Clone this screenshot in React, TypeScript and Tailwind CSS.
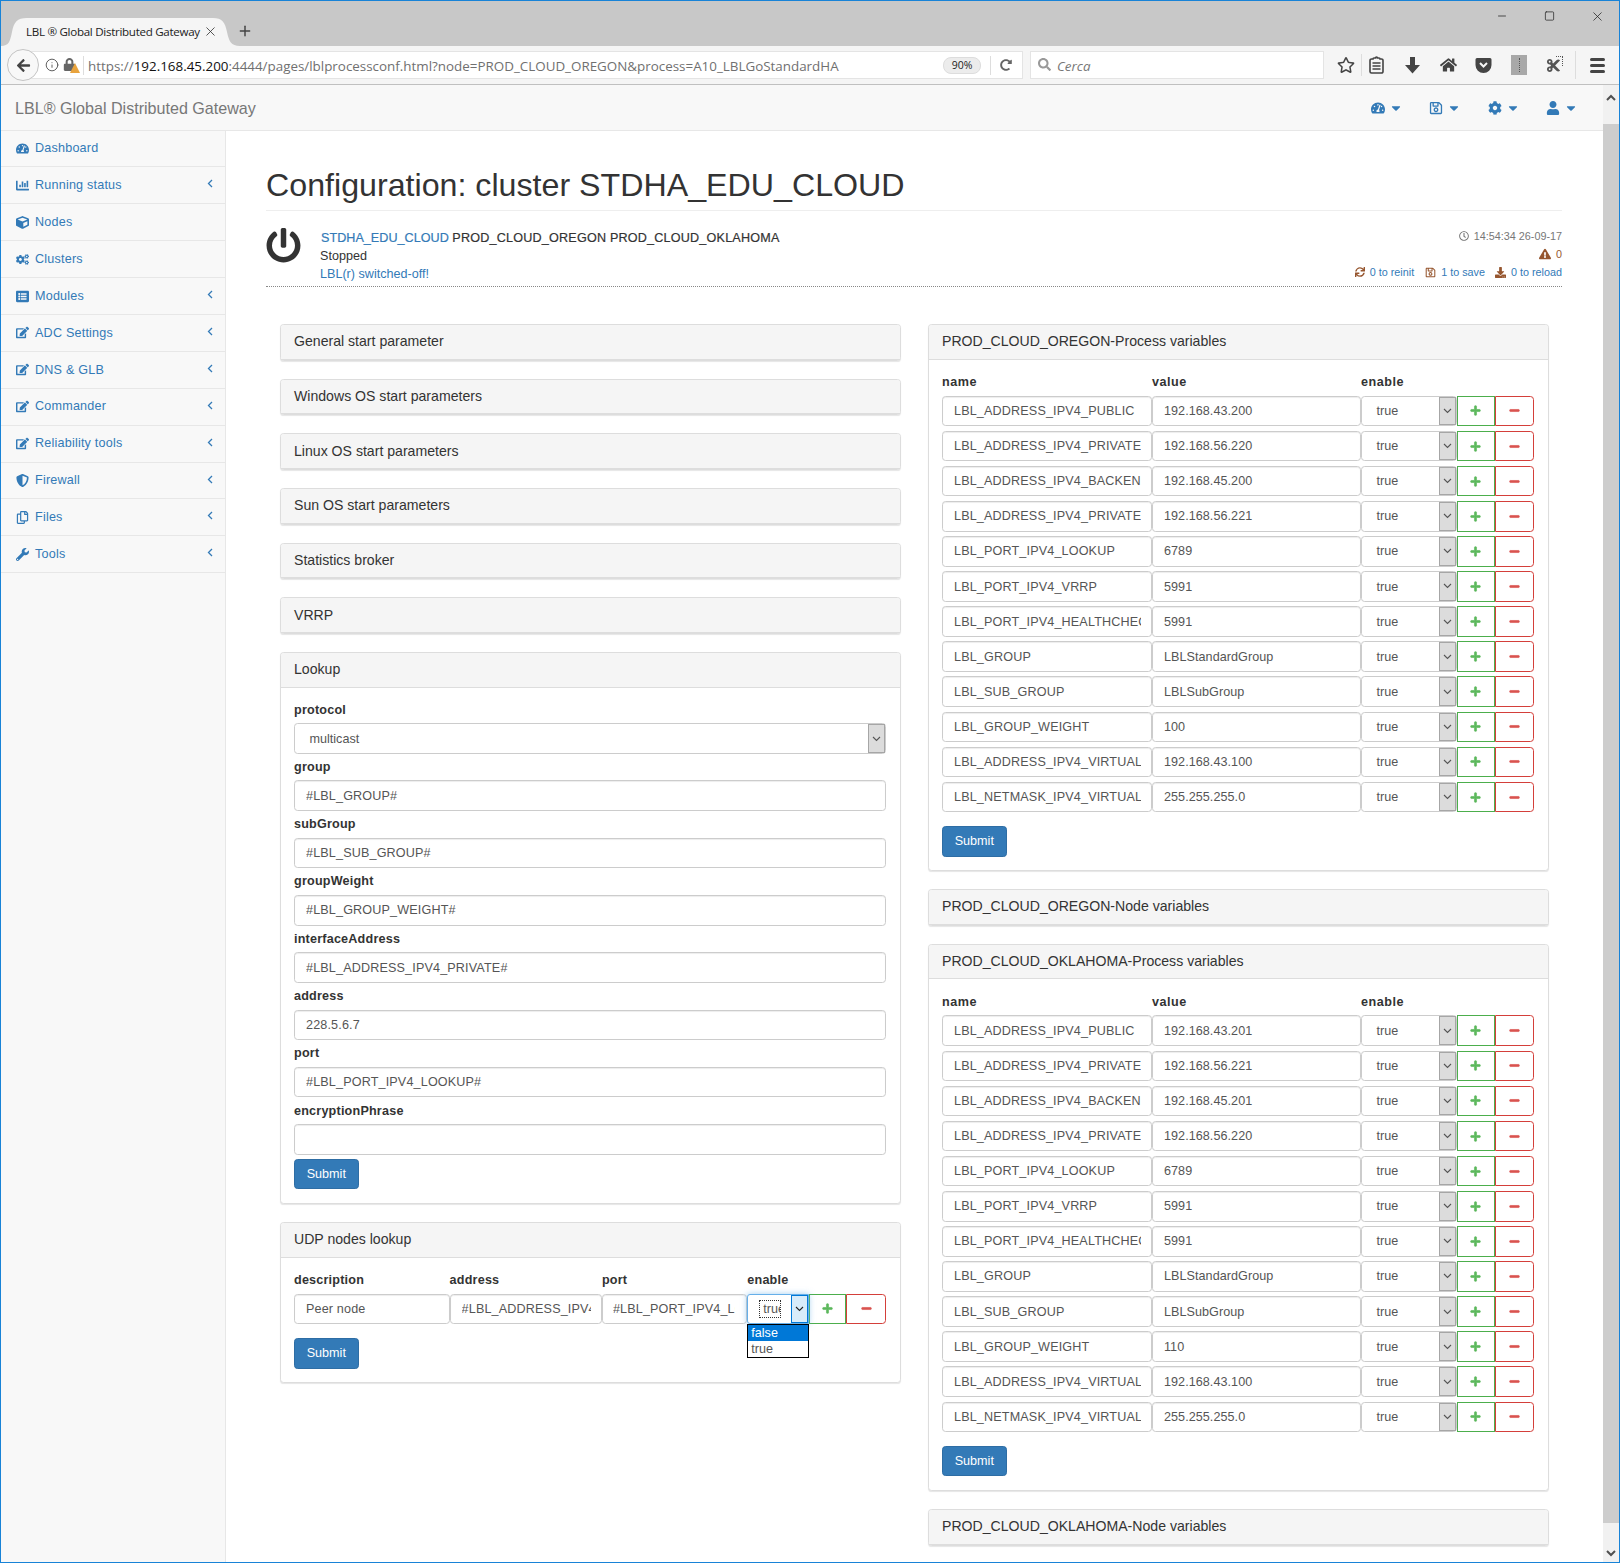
import React from "react";
import {
  FaTachometerAlt, FaChartBar, FaCube, FaCogs, FaListAlt, FaEdit, FaShieldAlt, FaRegCopy, FaWrench,
  FaPowerOff, FaRegClock, FaExclamationTriangle, FaSync, FaRegSave, FaDownload, FaPlus, FaMinus,
  FaCog, FaUser, FaCaretDown, FaRegStar, FaHome, FaCut, FaArrowLeft, FaLock, FaSearch, FaRedoAlt,
} from "react-icons/fa";
import { Minus, Square, X, Plus, Info } from "lucide-react";

const nav: [string, React.ComponentType<{ className?: string }>, boolean][] = [
  ["Dashboard", FaTachometerAlt, false],
  ["Running status", FaChartBar, true],
  ["Nodes", FaCube, false],
  ["Clusters", FaCogs, false],
  ["Modules", FaListAlt, true],
  ["ADC Settings", FaEdit, true],
  ["DNS & GLB", FaEdit, true],
  ["Commander", FaEdit, true],
  ["Reliability tools", FaEdit, true],
  ["Firewall", FaShieldAlt, true],
  ["Files", FaRegCopy, true],
  ["Tools", FaWrench, true],
];

const oregon: [string, string][] = [
  ["LBL_ADDRESS_IPV4_PUBLIC", "192.168.43.200"],
  ["LBL_ADDRESS_IPV4_PRIVATE", "192.168.56.220"],
  ["LBL_ADDRESS_IPV4_BACKEND", "192.168.45.200"],
  ["LBL_ADDRESS_IPV4_PRIVATE", "192.168.56.221"],
  ["LBL_PORT_IPV4_LOOKUP", "6789"],
  ["LBL_PORT_IPV4_VRRP", "5991"],
  ["LBL_PORT_IPV4_HEALTHCHECK", "5991"],
  ["LBL_GROUP", "LBLStandardGroup"],
  ["LBL_SUB_GROUP", "LBLSubGroup"],
  ["LBL_GROUP_WEIGHT", "100"],
  ["LBL_ADDRESS_IPV4_VIRTUAL", "192.168.43.100"],
  ["LBL_NETMASK_IPV4_VIRTUAL", "255.255.255.0"],
];
const oklahoma: [string, string][] = [
  ["LBL_ADDRESS_IPV4_PUBLIC", "192.168.43.201"],
  ["LBL_ADDRESS_IPV4_PRIVATE", "192.168.56.221"],
  ["LBL_ADDRESS_IPV4_BACKEND", "192.168.45.201"],
  ["LBL_ADDRESS_IPV4_PRIVATE", "192.168.56.220"],
  ["LBL_PORT_IPV4_LOOKUP", "6789"],
  ["LBL_PORT_IPV4_VRRP", "5991"],
  ["LBL_PORT_IPV4_HEALTHCHECK", "5991"],
  ["LBL_GROUP", "LBLStandardGroup"],
  ["LBL_SUB_GROUP", "LBLSubGroup"],
  ["LBL_GROUP_WEIGHT", "110"],
  ["LBL_ADDRESS_IPV4_VIRTUAL", "192.168.43.100"],
  ["LBL_NETMASK_IPV4_VIRTUAL", "255.255.255.0"],
];

const lookup: [string, string][] = [
  ["group", "#LBL_GROUP#"],
  ["subGroup", "#LBL_SUB_GROUP#"],
  ["groupWeight", "#LBL_GROUP_WEIGHT#"],
  ["interfaceAddress", "#LBL_ADDRESS_IPV4_PRIVATE#"],
  ["address", "228.5.6.7"],
  ["port", "#LBL_PORT_IPV4_LOOKUP#"],
  ["encryptionPhrase", ""],
];

function Chevron({ color = "#555" }: { color?: string }) {
  return (
    <svg width="9" height="6" viewBox="0 0 9 6" fill="none">
      <path d="M1 1l3.5 3.5L8 1" stroke={color} strokeWidth="1.1" />
    </svg>
  );
}

function Field({ value, pad = "pl-[11px] pr-[10px]", track = "tracking-[0.15px]" }: { value: string; pad?: string; track?: string }) {
  return (
    <div className={`h-[30.6px] bg-white border border-[#ccc] rounded-[3.6px] shadow-[inset_0_1px_1px_rgba(0,0,0,0.075)] flex items-center pt-[1px] ${pad} text-[12.6px] ${track} text-[#555] min-w-0`}>
      <div className="overflow-hidden whitespace-nowrap w-full">{value}</div>
    </div>
  );
}

function Select({ value }: { value: string }) {
  return (
    <div className="h-[30.6px] bg-white border border-[#ccc] rounded-[3.6px] flex items-stretch text-[12.6px] text-[#555] min-w-0">
      <div className="flex-1 flex items-center pl-[14.5px] pt-[1px]">{value}</div>
      <div className="w-[17px] bg-[#dcdcdc] border border-[#a6a6a6] flex items-center justify-center shrink-0">
        <Chevron />
      </div>
    </div>
  );
}

function AddBtn() {
  return (
    <div className="h-[30.6px] bg-white border border-[#4cae4c] flex items-center justify-center">
      <FaPlus className="text-[11px] text-[#5cb85c] stroke-current stroke-[30]" />
    </div>
  );
}
function DelBtn() {
  return (
    <div className="h-[30.6px] bg-white border border-[#d43f3a] rounded-r-[3.6px] flex items-center justify-center">
      <FaMinus className="text-[11px] text-[#d9534f] stroke-current stroke-[30]" />
    </div>
  );
}
function Submit() {
  return (
    <div className="w-[64.6px] h-[30.6px] bg-[#337ab7] border border-[#2e6da4] rounded-[3.6px] text-white text-[12.6px] pt-[1px] flex items-center justify-center">
      Submit
    </div>
  );
}

function Heading({ title }: { title: string }) {
  return (
    <div className="h-[34.7px] bg-[#f5f5f5] border-b border-[#ddd] rounded-t-[3px] flex items-center px-[13.5px] text-[14.1px] text-[#333]">
      {title}
    </div>
  );
}

function Panel({ title, children }: { title: string; children?: React.ReactNode }) {
  return (
    <div className="mb-[18px] bg-white border border-[#ddd] rounded-[3.6px] shadow-[0_1px_1px_rgba(0,0,0,0.1)]">
      <Heading title={title} />
      {children && <div className="p-[13.5px]">{children}</div>}
    </div>
  );
}

function VarTable({ rows }: { rows: [string, string][] }) {
  return (
    <div>
      <div className="grid grid-cols-[210px_209px_95.5px_38px_39.9px] h-[22.5px] text-[12.6px] tracking-[0.5px] font-bold text-[#333] leading-[18px]">
        <div>name</div>
        <div>value</div>
        <div>enable</div>
      </div>
      {rows.map(([n, v], i) => (
        <div key={i} className="grid grid-cols-[210px_209px_95.5px_38px_39.9px] mb-[4.5px]">
          <Field value={n} track="tracking-[0.15px]" />
          <Field value={v} track="tracking-[0.05px]" />
          <Select value="true" />
          <AddBtn />
          <DelBtn />
        </div>
      ))}
      <div className="pt-[9.2px]">
        <Submit />
      </div>
    </div>
  );
}

function Browser() {
  return (
    <>
      <div className="h-[45px] bg-[#c8c8c8] flex items-end relative shrink-0">
        <div className="relative w-[240px] h-[28px] flex items-center pl-[25px] text-[11.6px] text-[#222] font-['Open_Sans','Noto_Sans',sans-serif]">
          <svg className="absolute left-0 top-0" width="240" height="28" viewBox="0 0 240 28">
            <path d="M0 28c8 0 9-5 11-14C13 4 16 0 26 0h186c9 0 12 4 14 14 2 9 4 14 13 14z" fill="#f5f5f5" />
          </svg>
          <span className="relative whitespace-nowrap tracking-[-0.3px]">LBL ® Global Distributed Gateway</span>
          <X className="absolute left-[202px] top-[6px] w-[15px] h-[15px] text-[#333]" strokeWidth={1.3} />
        </div>
        <Plus className="ml-[-4px] mb-[7px] w-[16px] h-[16px] text-[#444]" strokeWidth={2.2} />
        <div className="ml-auto flex items-center self-start mt-[7px] gap-[35.5px] pr-[14px]">
          <Minus className="w-[12px] h-[16px] text-[#222]" strokeWidth={1.5} />
          <Square className="w-[11px] h-[12px] text-[#222]" strokeWidth={1.6} />
          <X className="w-[15px] h-[15px] text-[#222]" strokeWidth={1.2} />
        </div>
      </div>
      <div className="h-[39px] bg-[#f5f5f5] border-b border-[#c0c0c0] flex items-center shrink-0 font-['Open_Sans','Noto_Sans',sans-serif]">
        <div className="relative ml-[19px] w-[1003px] h-[28px] bg-white border border-[#e4e4e4] flex items-center pl-[67px]">
          <div className="absolute left-[-14px] top-[-3px] w-[32px] h-[32px] rounded-full bg-[#f8f8f8] border border-[#c4c4c4] flex items-center justify-center">
            <FaArrowLeft className="text-[15px] text-[#444]" />
          </div>
          <Info className="absolute left-[24px] top-[6px] w-[14px] h-[14px] text-[#555]" strokeWidth={1.6} />
          <FaLock className="absolute left-[42px] top-[6px] text-[13px] text-[#666]" />
          <svg className="absolute left-[49px] top-[11px]" width="10" height="10" viewBox="0 0 10 10">
            <path d="M5 0l5 10H0z" fill="#e8a33d" />
          </svg>
          <div className="absolute left-[62px] top-[4px] h-[19px] w-px bg-[#ddd]" />
          <span className="text-[13.4px] text-[#707070] whitespace-nowrap pt-[2px]">
            https://<span className="text-[#111]">192.168.45.200</span>:4444/pages/lblprocessconf.html?node=PROD_CLOUD_OREGON&amp;process=A10_LBLGoStandardHA
          </span>
          <div className="absolute left-[922px] top-[5px] w-[38px] h-[17px] rounded-[8px] bg-[#ececec] border border-[#ddd] text-[10.5px] text-[#222] flex items-center justify-center">
            90%
          </div>
          <div className="absolute left-[969px] top-[4px] h-[19px] w-px bg-[#ddd]" />
          <FaRedoAlt className="absolute left-[979px] top-[7px] text-[12px] text-[#666]" />
        </div>
        <div className="relative ml-[7px] w-[294px] h-[28px] bg-white border border-[#e4e4e4] flex items-center pl-[26px] pt-[2px] text-[13.4px] italic text-[#777]">
          <FaSearch className="absolute left-[7px] top-[6px] text-[13px] text-[#999]" />
          Cerca
        </div>
        <div className="flex items-center ml-[12px] text-[#444]">
          <FaRegStar className="text-[18px] ml-[1px] w-[18px]" />
          <div className="w-px h-[22px] bg-[#ddd] ml-[6px]" />
          <svg className="ml-[7px]" width="15" height="18" viewBox="0 0 15 18">
            <path d="M5 2h1.500a1 1 0 012 0H10a1 1 0 011 1h1.500A1.500 1.500 0 0114 4.500v11a1.500 1.500 0 01-1.500 1.500h-10A1.500 1.500 0 011 15.500v-11A1.500 1.500 0 012.500 3H4a1 1 0 011-1z" fill="none" stroke="#444" strokeWidth="1.600" />
            <path d="M3.500 7h8M3.500 10h8M3.500 13h8" stroke="#444" strokeWidth="1.500" />
          </svg>
          <svg className="ml-[21px]" width="15" height="18" viewBox="0 0 15 18">
            <path d="M5 1h5v8h5l-7.500 8.500L0 9h5z" fill="#444" />
          </svg>
          <FaHome className="text-[18px] ml-[20px] w-[17px]" />
          <svg className="ml-[18px]" width="17" height="16" viewBox="0 0 17 16">
            <path d="M2 1h13a1.500 1.500 0 011.500 1.500V8a8 8 0 01-16 0V2.500A1.500 1.500 0 012 1z" fill="#444" />
            <path d="M5 6l3.500 3.500L12 6" stroke="#f5f5f5" strokeWidth="2" fill="none" />
          </svg>
          <div className="ml-[19px] w-[16px] h-[20px] bg-[#a8a8a8] flex items-center justify-center">
            <div className="w-px h-[14px] border-l border-dotted border-[#555]" />
          </div>
          <div className="relative ml-[19px] w-[16px] h-[18px] flex items-center">
            <FaCut className="text-[15px] text-[#555]" />
            <div className="absolute right-[-1px] top-0 w-[7px] h-[10px] border-t border-r border-dotted border-[#555]" />
          </div>
          <div className="w-px h-[28px] bg-[#ddd] ml-[13px]" />
          <div className="ml-[14px] w-[15px] flex flex-col gap-[3px]">
            <div className="h-[3px] rounded-[2px] bg-[#444]" />
            <div className="h-[3px] rounded-[2px] bg-[#444]" />
            <div className="h-[3px] rounded-[2px] bg-[#444]" />
          </div>
        </div>
      </div>
    </>
  );
}

function NavIcon({ Icon, ml = "" }: { Icon: React.ComponentType<{ className?: string }>; ml?: string }) {
  return (
    <div className={`flex items-center ${ml} text-[#337ab7]`}>
      <div className="w-[14px] flex justify-center">
        <Icon className="text-[14px]" />
      </div>
      <FaCaretDown className="text-[14px] ml-[4px]" />
    </div>
  );
}

function Navbar() {
  return (
    <div className="h-[45.5px] bg-[#f8f8f8] border-b border-[#e7e7e7] flex items-center shrink-0 pt-[1px]">
      <div className="ml-[14px] text-[16.1px] text-[#777] whitespace-nowrap">LBL® Global Distributed Gateway</div>
      <div className="ml-auto flex items-center pr-[25px]">
        <NavIcon Icon={FaTachometerAlt} />
        <NavIcon Icon={FaRegSave} ml="ml-[26.5px]" />
        <NavIcon Icon={FaCog} ml="ml-[26.5px]" />
        <NavIcon Icon={FaUser} ml="ml-[26.5px]" />
      </div>
    </div>
  );
}

function Sidebar() {
  return (
    <div className="w-[225px] shrink-0 bg-[#f8f8f8] border-r border-[#e7e7e7]">
      {nav.map(([label, Icon, sub]) => (
        <div key={label} className="h-[36.9px] border-b border-[#e7e7e7] flex items-center pl-[15px] text-[12.6px] tracking-[0.2px] text-[#337ab7] relative">
          <div className="w-[19px] shrink-0">
            <Icon className="text-[13px]" />
          </div>
          <span className="pt-[0.5px]">{label}</span>
          {sub && (
            <svg className="absolute left-[206px] top-[12px]" width="6" height="9" viewBox="0 0 6 9" fill="none">
              <path d="M5 1L1.500 4.500 5 8" stroke="#337ab7" strokeWidth="1.300" />
            </svg>
          )}
        </div>
      ))}
    </div>
  );
}

function StatusBlock() {
  return (
    <div className="h-[76px] border-b border-dotted border-[#888] flex justify-between pt-[17px]">
      <div className="flex">
        <div className="w-[54px] shrink-0">
          <FaPowerOff className="text-[35px] text-[#333]" />
        </div>
        <div className="text-[12.6px] leading-[18px] text-[#333] pt-[0.5px]">
          <div className="whitespace-nowrap [-webkit-text-stroke:0.2px]">
            <span className="text-[#337ab7] ml-[1px] tracking-[0.03px]">STDHA_EDU_CLOUD</span>{" "}
            <span className="tracking-[0.2px]">PROD_CLOUD_OREGON PROD_CLOUD_OKLAHOMA</span>
          </div>
          <div>Stopped</div>
          <div className="text-[#337ab7]">LBL(r) switched-off!</div>
        </div>
      </div>
      <div className="text-[10.8px] leading-[18px] text-right -mt-[1px]">
        <div className="text-[#777] flex items-center justify-end gap-[5px]">
          <FaRegClock className="text-[10px]" />
          14:54:34 26-09-17
        </div>
        <div className="text-[#96562f] flex items-center justify-end gap-[5px]">
          <FaExclamationTriangle className="text-[12px]" />0
        </div>
        <div className="flex items-center justify-end text-[#337ab7]">
          <FaSync className="text-[10px] text-[#96562f] mr-[5px]" />0 to reinit
          <FaRegSave className="text-[11px] text-[#96562f] ml-[11px] mr-[5px]" />1 to save
          <FaDownload className="text-[11px] text-[#96562f] ml-[10px] mr-[5px]" />0 to reload
        </div>
      </div>
    </div>
  );
}

function LeftColumn() {
  return (
    <div className="px-[13.5px]">
      {["General start parameter", "Windows OS start parameters", "Linux OS start parameters", "Sun OS start parameters", "Statistics broker", "VRRP"].map((t) => (
        <Panel key={t} title={t} />
      ))}
      <Panel title="Lookup">
        <div className="text-[12.6px] tracking-[0.2px] font-bold text-[#333] leading-[18px] mb-[4px]">protocol</div>
        <div className="mb-[4px]">
          <Select value="multicast" />
        </div>
        {lookup.map(([l, v]) => (
          <div key={l} className="mb-[4.2px]">
            <div className="text-[12.6px] tracking-[0.2px] font-bold text-[#333] leading-[18px] mb-[4.5px]">{l}</div>
            <Field value={v} />
          </div>
        ))}
        <Submit />
      </Panel>
      <Panel title="UDP nodes lookup">
        <div className="grid grid-cols-[155.6px_152.3px_145.4px_62px_37px_39.6px] h-[22.5px] text-[12.6px] tracking-[0.2px] font-bold text-[#333] leading-[18px]">
          <div>description</div>
          <div>address</div>
          <div>port</div>
          <div>enable</div>
        </div>
        <div className="grid grid-cols-[155.6px_152.3px_145.4px_62px_37px_39.6px]">
          <Field value="Peer node" />
          <Field value="#LBL_ADDRESS_IPV4_PRIVATE#" />
          <Field value="#LBL_PORT_IPV4_LOOKUP#" pad="pl-[10px] pr-[11px]" />
          <div className="relative h-[30.6px] bg-white border border-[#66afe9] rounded-l-[3px] shadow-[0_0_6px_rgba(102,175,233,0.6)] flex items-stretch text-[12.6px] text-[#555]">
            <div className="flex-1 flex items-center pl-[11px]">
              <div className="w-[22px] h-[18px] overflow-hidden border border-dotted border-[#333] pl-[3px] leading-[16px] whitespace-nowrap">true</div>
            </div>
            <div className="w-[17px] shrink-0 bg-[#d8ecfa] border border-[#0078d7] flex items-center justify-center">
              <Chevron color="#222" />
            </div>
            <div className="absolute left-[-1px] top-[29.6px] w-[62px] h-[34px] bg-white border border-black text-[12.6px] leading-[16px] z-10">
              <div className="bg-[#0078d7] text-white pl-[3px]">false</div>
              <div className="pl-[3px] text-[#555]">true</div>
            </div>
          </div>
          <AddBtn />
          <DelBtn />
        </div>
        <div className="pt-[13.7px]">
          <Submit />
        </div>
      </Panel>
    </div>
  );
}

function RightColumn() {
  return (
    <div className="px-[13.5px]">
      <Panel title="PROD_CLOUD_OREGON-Process variables">
        <VarTable rows={oregon} />
      </Panel>
      <Panel title="PROD_CLOUD_OREGON-Node variables" />
      <Panel title="PROD_CLOUD_OKLAHOMA-Process variables">
        <VarTable rows={oklahoma} />
      </Panel>
      <Panel title="PROD_CLOUD_OKLAHOMA-Node variables" />
    </div>
  );
}

function Scrollbar() {
  return (
    <div className="w-[16px] shrink-0 bg-[#f1f1f1] flex flex-col">
      <div className="h-[39px] flex justify-center pt-[9px]">
        <svg width="10" height="7" viewBox="0 0 10 7" fill="none">
          <path d="M1 6l4-4 4 4" stroke="#505050" strokeWidth="2" />
        </svg>
      </div>
      <div className="h-[1399px] bg-[#cdcdcd]" />
      <div className="flex-1 flex justify-center items-end pb-[5px]">
        <svg width="10" height="7" viewBox="0 0 10 7" fill="none">
          <path d="M1 1l4 4 4-4" stroke="#505050" strokeWidth="2" />
        </svg>
      </div>
    </div>
  );
}

export default function App() {
  return (
    <div className="w-[1620px] h-[1563px] border border-[#1883d7] bg-white overflow-hidden flex flex-col font-['Liberation_Sans',Arial,sans-serif] text-[#333]">
      <Browser />
      <div className="flex-1 flex min-h-0">
        <div className="flex-1 flex flex-col min-w-0">
          <Navbar />
          <div className="flex-1 flex min-h-0">
            <Sidebar />
            <div className="flex-1 min-w-0 pl-[40px] pr-[41px] overflow-hidden">
              <div className="mt-[37.5px] h-[43px] border-b border-[#eee] text-[32.2px] leading-[35.6px] text-[#333] whitespace-nowrap">
                Configuration: cluster STDHA_EDU_CLOUD
              </div>
              <StatusBlock />
              <div className="mt-[37px] grid grid-cols-2">
                <LeftColumn />
                <RightColumn />
              </div>
            </div>
          </div>
        </div>
        <Scrollbar />
      </div>
    </div>
  );
}
